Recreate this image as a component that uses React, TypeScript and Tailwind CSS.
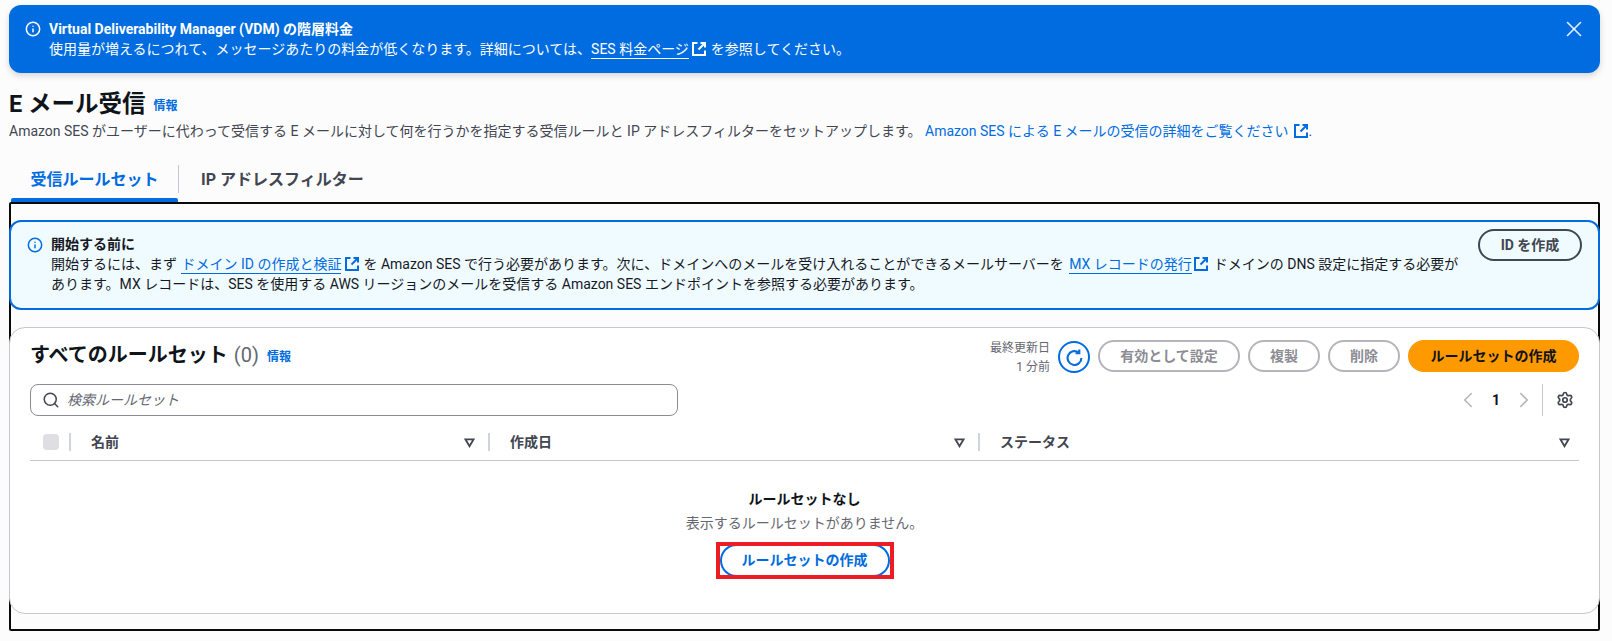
import { Info, Search, Settings, ChevronLeft, ChevronRight, X } from "lucide-react";

function ExternalIcon({ className }: { className: string }) {
  return (
    <svg viewBox="0 0 16 16" fill="none" stroke="currentColor" strokeWidth="2" className={`inline-block w-[16px] h-[16px] ${className}`}>
      <path d="M6.5 2H2v12h12V9.5" />
      <path d="M9.5 2H14v4.5" />
      <path d="M14 2 7.5 8.5" />
    </svg>
  );
}

function RefreshIcon() {
  return (
    <svg viewBox="0 0 16 16" fill="none" stroke="currentColor" strokeWidth="2" className="w-[17px] h-[17px] text-[#006ce0]">
      <path d="M14.5 8.5a6.5 6.5 0 1 1-2.6-5.2" />
      <path d="M12.5.5v3.5H9" />
    </svg>
  );
}

function SortIcon() {
  return (
    <svg viewBox="0 0 12 12" className="w-[11px] h-[11px] text-[#424650]" fill="none" stroke="currentColor" strokeWidth="2">
      <path d="M1.5 2.5h9L6 10z" />
    </svg>
  );
}

function OutlineButton({ label, className }: { label: string; className: string }) {
  return (
    <button className={`h-[32px] rounded-full border-2 border-[#b4b4bb] text-[14px] font-bold text-[#8c8c94] ${className}`}>
      {label}
    </button>
  );
}

function Header({ label, last }: { label: string; last?: boolean }) {
  return (
    <div className="flex items-center h-[22px]">
      <div className="w-[2px] h-[18px] bg-[#d1d5db]" />
      <span className="ml-[20px] text-[14px] font-bold text-[#424650]">{label}</span>
      <span className={`ml-auto ${last ? "mr-[9px]" : "mr-[13px]"}`}>
        <SortIcon />
      </span>
    </div>
  );
}

export default function App() {
  return (
    <div
      className="w-full h-[641px] overflow-hidden bg-[#fcfcfd] pl-[9px] pr-[12px] pt-[5px] text-[14px] text-[#0f141a]"
      style={{ fontFamily: 'Roboto, "Noto Sans CJK JP", sans-serif' }}
    >
      <div className="relative h-[68px] rounded-[12px] bg-[#006ce0] text-white pl-[16px] pt-[14px] shadow-[0_3px_6px_rgba(0,0,0,0.15)]">
        <div className="flex items-center h-[20px] leading-[20px]">
          <Info className="w-[16px] h-[16px] mr-[8px]" strokeWidth={2.25} />
          <span className="font-bold">Virtual Deliverability Manager (VDM) の階層料金</span>
        </div>
        <div className="pl-[24px] h-[20px] leading-[20px]">
          使用量が増えるにつれて、メッセージあたりの料金が低くなります。詳細については、
          <span className="border-b border-white pb-[1px]">SES 料金ページ</span>
          <ExternalIcon className="ml-[2px] mr-[4px] align-[-3px]" />
          を参照してください。
        </div>
        <X className="absolute right-[13px] top-[11px] w-[26px] h-[26px] text-white/90" strokeWidth={1.5} />
      </div>

      <div className="mt-[19px] flex items-center h-[24px]">
        <h1 className="text-[23.5px] leading-[24px] font-bold">E メール受信</h1>
        <span className="ml-[8px] mt-[4px] text-[12px] font-bold text-[#006ce0]">情報</span>
      </div>
      <p className="mt-[4px] h-[22px] leading-[22px] text-[14px] text-[#424650] whitespace-nowrap">
        Amazon SES がユーザーに代わって受信する E メールに対して何を行うかを指定する受信ルールと IP アドレスフィルターをセットアップします。{" "}
        <span className="text-[#006ce0]">Amazon SES による E メールの受信の詳細をご覧ください</span>
        <ExternalIcon className="ml-[4px] text-[#006ce0] align-[-3px]" />.
      </p>

      <div className="mt-[23px] flex h-[37px] pl-[2px]">
        <div className="relative w-[167px] flex justify-center pt-[3px] text-[16px] font-bold text-[#006ce0]">
          受信ルールセット
          <div className="absolute left-0 right-0 bottom-0 h-[4px] rounded-t-[2px] bg-[#006ce0]" />
        </div>
        <div className="w-[1px] h-[28px] bg-[#c6c6cd]" />
        <div className="pl-[22px] pt-[3px] text-[16px] font-bold text-[#424650]">IP アドレスフィルター</div>
      </div>

      <div className="h-[429px] rounded-[2px] border-2 border-[#0a0a0a] pt-[16px]">
        <div className="flex h-[90px] mx-[-2px] rounded-[12px] border-2 border-[#006ce0] bg-[#f0fbff] pl-[16px] pr-[16px]">
          <Info className="mt-[15px] w-[16px] h-[16px] shrink-0 text-[#006ce0]" strokeWidth={2.25} />
          <div className="ml-[8px] mt-[12px] w-[1415px] text-[14px] leading-[20px] text-[#16191f]">
            <div className="font-bold">開始する前に</div>
            <div>
              開始するには、まず{" "}
              <span className="ml-[1px] text-[#006ce0] border-b border-[#006ce0] pb-[1px]">ドメイン ID の作成と検証</span>
              <ExternalIcon className="ml-[3px] mr-[3px] text-[#006ce0] align-[-3px]" />
              を Amazon SES で行う必要があります。次に、ドメインへのメールを受け入れることができるメールサーバーを{" "}
              <span className="ml-[2px] text-[#006ce0] border-b border-[#006ce0] pb-[1px]">MX レコードの発行</span>
              <ExternalIcon className="ml-[1px] mr-[5px] text-[#006ce0] align-[-3px]" />
              ドメインの DNS 設定に指定する必要があります。MX レコードは、SES を使用する AWS リージョンのメールを受信する Amazon SES エンドポイントを参照する必要があります。
            </div>
          </div>
          <button className="ml-auto mt-[7px] h-[32px] w-[104px] shrink-0 rounded-full border-2 border-[#424650] text-[14px] font-bold text-[#424650]">
            ID を作成
          </button>
        </div>

        <div className="mt-[17px] h-[287px] mx-[-2px] rounded-[16px] border border-[#c6c6cd] bg-white px-[20px] pt-[12px]">
          <div className="flex items-start h-[36px]">
            <div className="flex items-center h-[30px]">
              <h2 className="text-[20px] font-bold leading-[28px]">すべてのルールセット</h2>
              <span className="ml-[6px] text-[20px] leading-[28px] text-[#656871]">(0)</span>
              <span className="ml-[8px] mt-[4px] text-[12px] font-bold text-[#006ce0]">情報</span>
            </div>
            <div className="ml-auto flex items-start">
              <div className="mr-[8px] text-right text-[12px] leading-[19px] text-[#656871] mt-[-1px]">
                <div>最終更新日</div>
                <div>1 分前</div>
              </div>
              <div className="mr-[8px] mt-[1px] flex h-[32px] w-[32px] items-center justify-center rounded-full border-2 border-[#006ce0]">
                <RefreshIcon />
              </div>
              <OutlineButton label="有効として設定" className="w-[142px] mr-[8px]" />
              <OutlineButton label="複製" className="w-[72px] mr-[8px]" />
              <OutlineButton label="削除" className="w-[72px] mr-[8px]" />
              <button className="h-[32px] w-[171px] rounded-full bg-[#ff9900] text-[14px] font-bold text-[#0f141a]">
                ルールセットの作成
              </button>
            </div>
          </div>

          <div className="flex items-center h-[32px] mt-[8px]">
            <div className="flex h-[32px] w-[648px] items-center rounded-[8px] border border-[#8c8c94] bg-white pl-[11px]">
              <Search className="w-[18px] h-[18px] text-[#424650]" strokeWidth={2} />
              <span className="ml-[7px] text-[14px] italic text-[#656871]">検索ルールセット</span>
            </div>
            <div className="ml-auto flex items-center h-[32px]">
              <ChevronLeft className="w-[26px] h-[26px] text-[#b4b4bb]" strokeWidth={1.5} />
              <span className="mx-[11px] text-[14px] font-bold text-[#0f141a]">1</span>
              <ChevronRight className="w-[26px] h-[26px] text-[#b4b4bb]" strokeWidth={1.5} />
              <div className="ml-[5px] w-[1px] h-[32px] bg-[#c6c6cd]" />
              <Settings className="ml-[13px] mr-[5px] w-[18px] h-[18px] text-[#424650]" strokeWidth={2.25} />
            </div>
          </div>

          <div className="mt-[15px] grid grid-cols-[39px_419px_490px_1fr] items-center h-[30px] border-b border-[#c6c6cd] pb-[7px]">
            <div className="flex items-center h-[22px]">
              <div className="ml-[13px] w-[16px] h-[16px] rounded-[4px] bg-[#dedee3]" />
            </div>
            <Header label="名前" />
            <Header label="作成日" />
            <Header label="ステータス" last />
          </div>

          <div className="flex flex-col items-center pt-[27px]">
            <div className="text-[14px] leading-[22px] font-bold text-[#0f141a]">ルールセットなし</div>
            <div className="mt-[2px] text-[14px] leading-[22px] text-[#656871]">表示するルールセットがありません。</div>
            <div className="mt-[8px] h-[37px] w-[178px] border-[4px] border-[#ed1c24] overflow-hidden">
              <button className="block w-[170px] h-[33px] mt-[-2px] rounded-full border-2 border-[#006ce0] text-[14px] font-bold text-[#006ce0]">
                ルールセットの作成
              </button>
            </div>
          </div>
        </div>
      </div>
    </div>
  );
}
